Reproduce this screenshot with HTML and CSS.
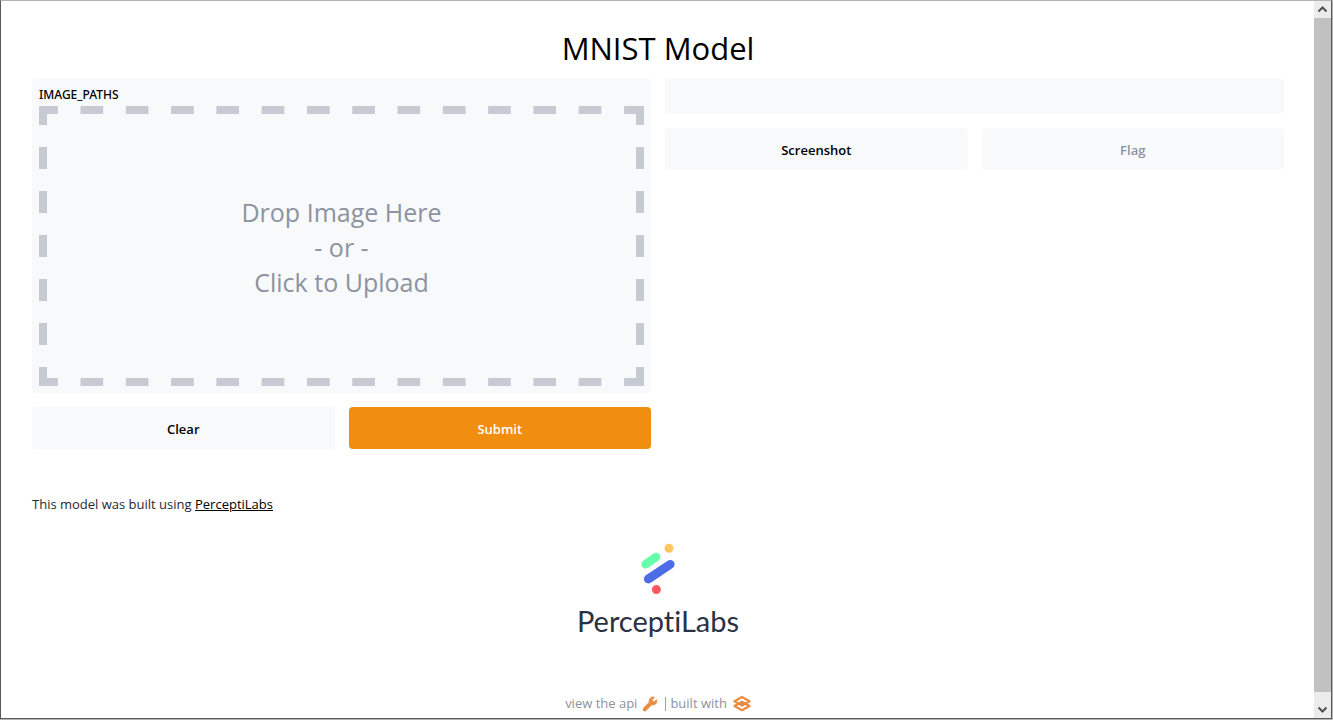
FILE: index.html
```html
<!DOCTYPE html>
<html lang="en">
<head>
    <meta charset="UTF-8">
    <meta name="viewport" content="width=device-width, initial-scale=1.0">
    <title>MNIST Model</title>
    <link rel="stylesheet" href="styles.css">
</head>
<body>
    <div class="window">
        <div class="page">
            <h1>MNIST Model</h1>

            <main class="interface">
                <section class="column">
                    <div class="panel">
                        <label class="panel-label" for="imageInput">IMAGE_PATHS</label>
                        <label class="drop-area">
                            <input type="file" id="imageInput" accept="image/*">
                            <span>Drop Image Here</span>
                            <span>- or -</span>
                            <span>Click to Upload</span>
                        </label>
                    </div>
                    <div class="button-row">
                        <button type="button" class="btn">Clear</button>
                        <button type="button" class="btn btn-submit">Submit</button>
                    </div>
                </section>

                <section class="column">
                    <div class="panel output"></div>
                    <div class="button-row">
                        <button type="button" class="btn">Screenshot</button>
                        <button type="button" class="btn" disabled>Flag</button>
                    </div>
                </section>
            </main>

            <article>
                <p>This model was built using <a href="#">PerceptiLabs</a></p>
                <div class="brand">
                    <svg width="34" height="52" viewBox="0 0 34 52" fill="none" stroke-linecap="round">
                        <path d="M4.7 21.2 15 14" stroke="#67ffaa" stroke-width="8.6"/>
                        <path d="M7.3 36 29.2 21.3" stroke="#4d6de8" stroke-width="8.8"/>
                        <circle cx="28" cy="5.3" r="4.5" fill="#fec561"/>
                        <circle cx="15.4" cy="46.6" r="4.5" fill="#fe5761"/>
                    </svg>
                    <span class="brand-name">PerceptiLabs</span>
                </div>
            </article>

            <footer>
                <a href="#">view the api
                    <svg width="14" height="16" viewBox="0 0 512 512" fill="#e98b41" stroke="#e98b41" stroke-width="30" stroke-linejoin="round">
                        <path d="M507.7 109.1c-2.2-9-13.5-12.1-20.1-5.5l-74.4 74.4-67.9-11.3L334 98.900l74.400-74.400c6.600-6.600 3.400-17.900-5.700-20.200-47.400-11.700-99.600.9-136.600 37.900-39.600 39.600-50.500 97.100-34.100 147.200L18.700 402.800c-25 25-25 65.500 0 90.500s65.500 25 90.500 0l213.200-213.200c50.100 16.700 107.500 5.700 147.400-34.200 37.100-37.100 49.700-89.300 37.900-136.800z"/>
                    </svg>
                </a>
                <span class="divider"></span>
                <a href="#">built with
                    <svg width="18" height="18" viewBox="0 0 18 18" fill="none" stroke="#e98b41" stroke-width="2.3" stroke-linejoin="round">
                        <path d="M9 2 16.500 6.200 9 10.400 1.500 6.200z"/>
                        <path d="M9 6.800 16.500 11 9 15.200 1.500 11z"/>
                    </svg>
                </a>
            </footer>
        </div>

        <div class="scrollbar" aria-hidden="true">
            <svg class="arrow" width="17" height="17" viewBox="0 0 17 17"><path d="M4.5 10.500 8.500 6.500 12.500 10.500"/></svg>
            <div class="thumb"></div>
            <svg class="arrow" width="17" height="17" viewBox="0 0 17 17"><path d="M4.500 6.500 8.500 10.500 12.500 6.500"/></svg>
        </div>
    </div>
</body>
</html>
```
FILE: styles.css
```css
:root {
    --panel: #f8f9fb;
    --dash: #c6cad3;
    --muted: #8c93a1;
    --accent: #f18d0f;
}

* {
    box-sizing: border-box;
    margin: 0;
    padding: 0;
}

body {
    font-family: 'Open Sans', 'Noto Sans', sans-serif;
    font-size: 13px;
    line-height: 21px;
    color: #000;
    background: #b4b4b4;
    padding: 0 1px 1px 0;
}

.window {
    display: flex;
    min-height: calc(100vh - 1px);
    border: 1px solid #5a5a5c;
    border-top-color: #b4b4b4;
    background: #fff;
}

.page {
    flex: 1;
    display: flex;
    flex-direction: column;
    padding: 27px 30px 4px 31px;
}

h1 {
    font-size: 31px;
    font-weight: 400;
    line-height: 40px;
    text-align: center;
    margin-bottom: 10px;
}

.interface {
    display: grid;
    grid-template-columns: 1fr 1fr;
    gap: 14px;
}

.column {
    display: flex;
    flex-direction: column;
    gap: 14px;
}

.panel {
    background: var(--panel);
    border-radius: 4px;
    padding: 7px;
}

.output {
    height: 36px;
}

.panel-label {
    display: block;
    font-family: 'Noto Sans', 'Open Sans', sans-serif;
    font-size: 12px;
    font-weight: 500;
    line-height: 19px;
    margin-bottom: 2px;
}

/* dashes keep an even rhythm and always meet in the corners */
.drop-area {
    --row: linear-gradient(90deg, var(--dash) 25%, transparent 25% 75%, var(--dash) 75%);
    --col: linear-gradient(var(--dash) 25%, transparent 25% 75%, var(--dash) 75%);
    display: flex;
    flex-direction: column;
    align-items: center;
    justify-content: center;
    height: 280px;
    padding-top: 2px;
    border: 8px solid transparent;
    background-image: var(--row), var(--row), var(--col), var(--col);
    background-size: 44px 8px, 44px 8px, 8px 44px, 8px 44px;
    background-position: 0 -8px, 0 calc(100% + 8px), -8px 0, calc(100% + 8px) 0;
    background-repeat: round no-repeat, round no-repeat, no-repeat round, no-repeat round;
    color: var(--muted);
    font-size: 25px;
    line-height: 35px;
    cursor: pointer;
}

.drop-area input {
    position: absolute;
    width: 1px;
    height: 1px;
    opacity: 0;
}

.button-row {
    display: grid;
    grid-template-columns: 1fr 1fr;
    gap: 14px;
}

.btn {
    height: 42px;
    padding-top: 2px;
    border: none;
    border-radius: 4px;
    background: var(--panel);
    color: #000;
    font: inherit;
    font-weight: 600;
    cursor: pointer;
}

.btn:disabled {
    color: var(--muted);
    cursor: default;
}

.btn-submit {
    background: var(--accent);
    color: #fff;
}

article {
    margin-top: 45px;
    color: #1f2937;
}

article a {
    color: #000;
}

.brand {
    display: flex;
    flex-direction: column;
    align-items: center;
    margin-top: 28px;
}

.brand-name {
    color: #2a3143;
    font-family: Lato, 'Open Sans', sans-serif;
    font-size: 29px;
    font-variant-ligatures: none;
    line-height: 36px;
    margin-top: 8px;
}

footer {
    display: flex;
    align-items: center;
    justify-content: center;
    gap: 4px;
    margin-top: auto;
    color: var(--muted);
}

footer a {
    display: flex;
    align-items: center;
    gap: 6px;
    color: inherit;
    text-decoration: none;
}

.divider {
    width: 1px;
    height: 14px;
    margin-left: 4px;
    background: #83b77f;
}

.scrollbar {
    display: flex;
    flex-direction: column;
    width: 17px;
    background: #ececec;
}

.thumb {
    flex: 1;
    margin-bottom: 9px;
    background: #c1c1c1;
}

.arrow {
    display: block;
    fill: none;
    stroke: #505050;
    stroke-width: 2;
}
```
